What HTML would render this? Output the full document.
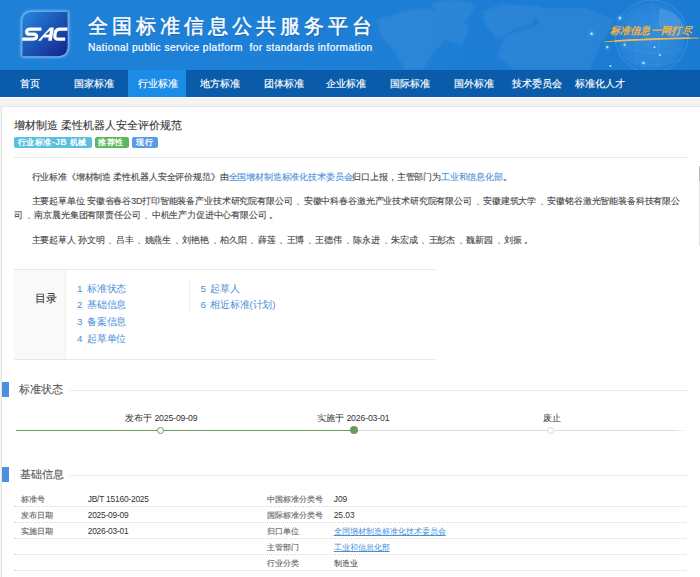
<!DOCTYPE html>
<html><head><meta charset="utf-8">
<style>
*{margin:0;padding:0;box-sizing:border-box}
html,body{width:700px;height:577px;overflow:hidden;background:#f3f3f3;font-family:"Liberation Sans",sans-serif;color:#333}
.a{position:absolute;white-space:nowrap}
#hdr{position:absolute;left:0;top:0;width:700px;height:70px;background:linear-gradient(90deg,#1f80d8 0%,#1e7fd6 50%,#1b7ad2 100%);overflow:hidden}
#nav{position:absolute;left:0;top:70px;width:700px;height:26.8px;background:#0a5cab}
#nav .it{position:absolute;top:0;height:26.8px;line-height:27.6px;font-size:9.8px;color:#fff;-webkit-text-stroke:0.15px #fff}
#nav .act{background:#1a8be6}
#card{position:absolute;left:1.2px;top:106.2px;width:720px;height:480px;background:#fff;border:0.8px solid #e6e6e6}
.t{position:absolute;white-space:nowrap;line-height:1}
.b{-webkit-text-stroke:0.1px currentColor}
.d{position:relative;left:1.5px}
.lbl{position:absolute;top:136.8px;height:11.4px;border-radius:2px;color:#fff;font-weight:bold;font-size:8.4px;line-height:11.6px;padding:0 3.7px;letter-spacing:0.5px}
.lnk{color:#4a8fd8}
.toc{color:#4a8fd8;font-size:9.8px;letter-spacing:-0.2px}
.sec{position:absolute;font-size:11.2px;color:#555}
.mk{position:absolute;left:2px;width:7px;background:#4a90e2}
.hl{position:absolute;height:1px;background:#ececec}
.dot{position:absolute;border-radius:50%}
.row{position:absolute;left:13.7px;width:672.3px;height:0;border-top:1px dotted #d8d8d8}
.lab{position:absolute;font-size:8.4px;color:#6e6e6e;line-height:1;-webkit-text-stroke:0.15px #6e6e6e}
.val{position:absolute;font-size:8.4px;color:#333;line-height:1}
</style></head><body>
<div id="hdr">
  <svg width="700" height="70" style="position:absolute;left:0;top:0">
    <defs>
      <linearGradient id="lg" x1="0" y1="0" x2="1" y2="1">
        <stop offset="0" stop-color="#228ae0"/><stop offset="1" stop-color="#13218a"/>
      </linearGradient>
      <radialGradient id="glob" cx="0.5" cy="0.5" r="0.5">
        <stop offset="0" stop-color="#7cc8ff" stop-opacity="0.25"/><stop offset="0.85" stop-color="#7cc8ff" stop-opacity="0.12"/><stop offset="1" stop-color="#7cc8ff" stop-opacity="0"/>
      </radialGradient>
    </defs>
    <filter id="blr" x="-10%" y="-10%" width="120%" height="120%"><feGaussianBlur stdDeviation="1"/></filter>
    <filter id="glw" x="-30%" y="-30%" width="160%" height="160%"><feGaussianBlur stdDeviation="1.6"/></filter>
    <path d="M21.5 22 Q21.5 11 32.5 11 L68.5 11 L68.5 46 Q68.5 57 57.5 57 L21.5 57 Z" fill="#bfe3ff" opacity="0.9" filter="url(#glw)"/>
    <path d="M22.3 22.3 Q22.3 11.8 32.8 11.8 L67.7 11.8 L67.7 45.7 Q67.7 56.2 57.2 56.2 L22.3 56.2 Z" fill="url(#lg)"/>
    <g fill="none" stroke="#fff" stroke-width="3.3" stroke-linejoin="round">
      <path d="M41.4 29.2 L30.6 29.2 Q26.8 29.2 26.6 31.8 Q26.4 34.2 29.8 34.2 L33.6 34.2 Q37 34.2 36.5 36.9 Q36 39.2 32.6 39.2 L22.2 39.2"/>
      <path d="M67.4 29.2 L60.2 29.2 Q55.6 29.2 55.1 33.4 L54.9 35.4 Q54.5 39.2 58.2 39.2 L65.2 39.2"/>
    </g>
    <path fill="#fff" fill-rule="evenodd" d="M37.9 40.8 L50 27.6 L53.9 27.6 L51.8 40.8 L48.2 40.8 L48.7 37.6 L43.2 37.6 L41.1 40.8 Z M45.2 34.6 L49.2 34.6 L50 30.6 Z"/>
    <g fill="#ffffff" opacity="0.06" filter="url(#blr)">
      <path d="M377 20 L400 12 L420 8 L445 12 L470 26 L462 45 L445 40 L432 55 L422 70 L405 70 L395 52 L381 36 Z"/>
      <path d="M430 3 L455 0 L476 4 L468 20 L450 25 L440 15 Z"/>
      <path d="M482 12 L502 4 L540 6 L532 24 L512 30 L498 40 L486 26 Z"/>
      <path d="M532 8 L585 8 L615 20 L600 45 L590 70 L515 70 L497 56 L505 36 L540 24 Z"/>
    </g>
    <circle cx="651.5" cy="36.5" r="36.5" fill="url(#glob)"/>
    <circle cx="651.5" cy="36.5" r="36.5" fill="none" stroke="#9fd4ff" stroke-opacity="0.28" stroke-width="0.8"/>
    <path d="M660 8 Q680 12 686 30 Q680 40 668 36 Q655 30 660 8 Z" fill="#ffffff" opacity="0.12"/>
    <g stroke="#b8e0ff" stroke-opacity="0.18" stroke-width="0.5" fill="none">
      <path d="M620 45 Q650 60 685 48"/><path d="M618 55 Q650 72 680 60"/><path d="M630 20 Q640 50 635 72"/><path d="M650 0 Q665 40 655 72"/>
    </g>
    <g fill="#c8f2ff">
      <circle cx="591.6" cy="33.8" r="1.2"/><circle cx="619.9" cy="18" r="1.3"/><circle cx="607.3" cy="47.2" r="1.1"/>
      <circle cx="624.6" cy="44.8" r="1"/><circle cx="643.5" cy="62.9" r="1.1"/><circle cx="660" cy="55" r="0.9"/>
      <circle cx="654.5" cy="47.2" r="0.9"/><circle cx="610.4" cy="66" r="0.9"/><circle cx="640" cy="30" r="0.7"/>
    </g>
    <g fill="#6fd0ff" opacity="0.45" filter="url(#glw)">
      <circle cx="591.6" cy="33.8" r="2.2"/><circle cx="619.9" cy="18" r="2.4"/><circle cx="607.3" cy="47.2" r="2"/><circle cx="624.6" cy="44.8" r="1.8"/><circle cx="643.5" cy="62.9" r="2"/>
    </g>
    <path d="M604 41.5 Q640 37.8 699 37.5 L699 38.6 Q650 40.2 604 42.2 Z" fill="#eba93c"/>
    <path d="M615 40.8 Q650 38.5 690 38" stroke="#f6c060" stroke-width="1.2" fill="none"/>
  </svg>
    <div class="t" style="left:87.5px;top:15.5px;font-size:20px;color:#fff;letter-spacing:4.06px;-webkit-text-stroke:0.45px #fff;text-shadow:0.5px 0.8px 0.8px rgba(0,40,100,0.35)">全国标准信息公共服务平台</div>
  <div class="t" style="left:88px;top:42.7px;font-size:10.2px;color:#fff;letter-spacing:0.42px;-webkit-text-stroke:0.2px #fff">National public service platform&nbsp; for standards information</div>
  <div class="t" style="left:609.5px;top:26px;font-size:10px;color:#f2b13a;font-style:italic;font-weight:bold;letter-spacing:0.3px">标准信息一网打尽</div>
</div>
<div id="nav">
  <div class="it" style="left:20px">首页</div>
  <div class="it" style="left:74px">国家标准</div>
  <div class="it act" style="left:127.5px;width:58.5px;padding-left:10px">行业标准</div>
  <div class="it" style="left:200px">地方标准</div>
  <div class="it" style="left:263.5px">团体标准</div>
  <div class="it" style="left:326px">企业标准</div>
  <div class="it" style="left:390px">国际标准</div>
  <div class="it" style="left:453.5px">国外标准</div>
  <div class="it" style="left:511.5px">技术委员会</div>
  <div class="it" style="left:575px">标准化人才</div>
</div>
<div style="position:absolute;left:0;top:96.8px;width:700px;height:1.2px;background:#fff"></div>
<div id="card"></div>
<div id="ttl" class="t b" style="left:14px;top:119.8px;font-size:11.2px;color:#333">增材制造 柔性机器人安全评价规范</div>
<div class="lbl" style="left:14.3px;background:#5bc0de;width:77.7px">行业标准-JB 机械</div>
<div class="lbl" style="left:94.7px;background:#5cb85c;width:34.3px">推荐性</div>
<div class="lbl" style="left:132.4px;background:#5a9be6;width:25.5px">现行</div>
<div class="hl" style="left:14.3px;top:156.6px;width:673.4px;background:#e8e8e8"></div>

<div id="p1" class="t b" style="color:#444;left:31.5px;top:173px;font-size:8.8px;letter-spacing:-0.15px">行业标准《增材制造 柔性机器人安全评价规范》由<span class="lnk">全国增材制造标准化技术委员会</span>归口上报，主管部门为<span class="lnk">工业和信息化部</span>。</div>
<div id="p2a" class="t b" style="color:#444;left:31.5px;top:197px;font-size:8.8px;letter-spacing:-0.15px">主要起草单位 安徽省春谷3D打印智能装备产业技术研究院有限公司 <span class="d">、</span>安徽中科春谷激光产业技术研究院有限公司 <span class="d">、</span>安徽建筑大学 <span class="d">、</span>安徽铭谷激光智能装备科技有限公</div>
<div id="p2b" class="t b" style="color:#444;left:14.3px;top:211.3px;font-size:8.8px;letter-spacing:-0.15px">司 <span class="d">、</span>南京晨光集团有限责任公司 <span class="d">、</span>中机生产力促进中心有限公司 。</div>
<div id="p3" class="t b" style="color:#444;left:31.5px;top:236.1px;font-size:8.8px;letter-spacing:-0.15px">主要起草人 孙文明 <span class="d">、</span>吕丰 <span class="d">、</span>姚燕生 <span class="d">、</span>刘艳艳 <span class="d">、</span>柏久阳 <span class="d">、</span>薛莲 <span class="d">、</span>王博 <span class="d">、</span>王德伟 <span class="d">、</span>陈永进 <span class="d">、</span>朱宏成 <span class="d">、</span>王彭杰 <span class="d">、</span>魏新园 <span class="d">、</span>刘振 。</div>

<!-- TOC -->
<div style="position:absolute;left:14.3px;top:269px;width:421px;height:91px;border-top:1.4px solid #e8e8e8;border-bottom:1.4px solid #e8e8e8"></div>
<div style="position:absolute;left:14.3px;top:270.4px;width:51.4px;height:88.2px;background:#f9f9f9;border-right:1px solid #eeeeee"></div>
<div class="t b" style="left:34.9px;top:293px;font-size:10.5px;color:#333">目录</div>
<div class="t toc" style="left:77px;top:283.5px">1</div><div class="t toc" style="left:87.1px;top:283.5px">标准状态</div>
<div class="t toc" style="left:77px;top:300.2px">2</div><div class="t toc" style="left:87.1px;top:300.2px">基础信息</div>
<div class="t toc" style="left:77px;top:317px">3</div><div class="t toc" style="left:87.1px;top:317px">备案信息</div>
<div class="t toc" style="left:77px;top:334.3px">4</div><div class="t toc" style="left:87.1px;top:334.3px">起草单位</div>
<div class="t toc" style="left:200.6px;top:283.5px">5</div><div class="t toc" style="left:210.3px;top:283.5px">起草人</div>
<div class="t toc" style="left:200.6px;top:300.2px">6</div><div class="t toc" style="left:210.3px;top:300.2px">相近标准(计划)</div>
<div style="position:absolute;left:189px;top:279.6px;width:1px;height:33.3px;background:#eeeeee"></div>

<!-- status -->
<div class="mk" style="top:382px;height:15px"></div>
<div class="sec t b" style="left:19px;top:384px">标准状态</div>
<div class="hl" style="left:69px;top:389.5px;width:619px"></div>
<div class="t" style="left:125px;top:413.8px;font-size:8.7px">发布于 <span style="letter-spacing:-0.15px">2025-09-09</span></div>
<div class="t" style="left:317px;top:413.8px;font-size:8.7px">实施于 <span style="letter-spacing:-0.15px">2026-03-01</span></div>
<div class="t" style="left:543px;top:413.8px;font-size:8.7px">废止</div>
<div style="position:absolute;left:16px;top:429.8px;width:337.6px;height:1.2px;background:#6b9a5e"></div>
<div style="position:absolute;left:353.6px;top:429.8px;width:334px;height:1.2px;background:linear-gradient(90deg,#dcdcdc 0%,#dcdcdc 95%,rgba(220,220,220,0) 100%)"></div>
<div class="dot" style="left:157.2px;top:426.9px;width:7px;height:7px;background:#fff;border:1px solid #6b9a5e"></div>
<div class="dot" style="left:349.6px;top:426.3px;width:8px;height:8px;background:#6b9a5e"></div>
<div class="dot" style="left:547.4px;top:426.9px;width:7px;height:7px;background:#fff;border:1px solid #d8d8d8"></div>

<!-- basic info -->
<div class="mk" style="top:467.3px;height:14.7px"></div>
<div class="sec t b" style="left:20px;top:469.4px">基础信息</div>
<div class="hl" style="left:68.7px;top:474.6px;width:619px"></div>
<div class="row" style="top:506px"></div>
<div class="row" style="top:522px"></div>
<div class="row" style="top:538px"></div>
<div class="row" style="top:554px"></div>
<div class="row" style="top:570px"></div>
<div class="lab" style="left:21.1px;top:495px">标准号</div>
<div class="lab" style="left:21.1px;top:511.3px">发布日期</div>
<div class="lab" style="left:21.1px;top:527px">实施日期</div>
<div class="val" style="left:87.7px;top:495px;letter-spacing:-0.2px">JB/T 15160-2025</div>
<div class="val" style="left:87.7px;top:511.3px;letter-spacing:-0.2px">2025-09-09</div>
<div class="val" style="left:87.7px;top:527px;letter-spacing:-0.2px">2026-03-01</div>
<div class="lab" style="left:266.7px;top:495px">中国标准分类号</div>
<div class="lab" style="left:266.7px;top:511.3px">国际标准分类号</div>
<div class="lab" style="left:266.7px;top:527px">归口单位</div>
<div class="lab" style="left:266.7px;top:542.7px">主管部门</div>
<div class="lab" style="left:266.7px;top:559.2px">行业分类</div>
<div class="val" style="left:333.7px;top:495px">J09</div>
<div class="val" style="left:333.7px;top:511.3px">25.03</div>
<div class="val" style="color:#4a8fd8;left:333.7px;top:527px;text-decoration:underline">全国增材制造标准化技术委员会</div>
<div class="val" style="color:#4a8fd8;left:333.7px;top:542.7px;text-decoration:underline">工业和信息化部</div>
<div class="val" style="left:333.7px;top:559.2px">制造业</div>

<div style="position:absolute;left:698.6px;top:165.7px;width:2px;height:80.3px;background:#f7f7f7;border-left:0.8px solid #e2e2e2"></div>
<div style="position:absolute;left:698.6px;top:165.7px;width:2px;height:15px;background:#b4b8bd"></div>
</body></html>
